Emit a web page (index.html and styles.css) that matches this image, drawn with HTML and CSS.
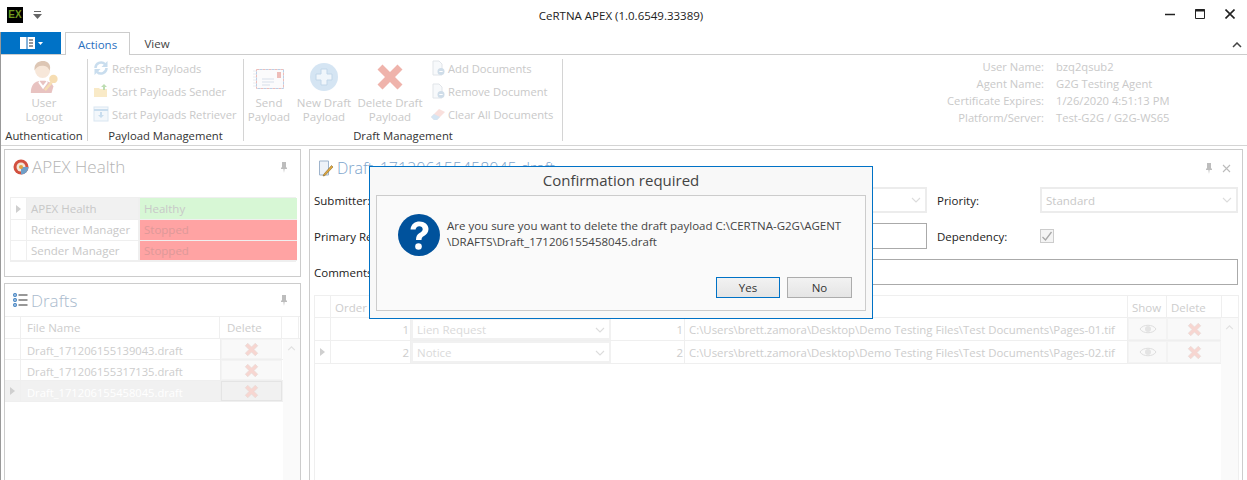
FILE: index.html
```html
<!DOCTYPE html>
<html lang="en">
<head>
<meta charset="utf-8">
<title>CeRTNA APEX</title>
<link rel="stylesheet" href="styles.css">
</head>
<body>
<svg class="defs" width="0" height="0" aria-hidden="true">
  <defs>
    <symbol id="x" viewBox="0 0 24 24"><path d="M2 6 6 2l6 6 6-6 4 4-6 6 6 6-4 4-6-6-6 6-4-4 6-6z" fill="#f7d6d1" stroke="#e6d8d6" stroke-width="1"/></symbol>
    <symbol id="bigx" viewBox="0 0 24 24"><path d="M2 6 6 2l6 6 6-6 4 4-6 6 6 6-4 4-6-6-6 6-4-4 6-6z" fill="#efb3ab"/></symbol>
    <symbol id="pin" viewBox="0 0 10 12"><path d="M3 1h4v5l1 1v1H5.600L5 12 4.400 8H2V7l1-1z" fill="#bdbdbd"/></symbol>
    <symbol id="eye" viewBox="0 0 18 12"><path d="M1 6c3-5 13-5 16 0-3 5-13 5-16 0z" fill="none" stroke="#dedede"/><circle cx="9" cy="6" r="3" fill="#e4e4e4"/></symbol>
    <symbol id="chev" viewBox="0 0 10 6"><path d="M1 1l4 4 4-4" fill="none" stroke="#dcdcdc" stroke-width="1.100"/></symbol>
    <symbol id="chevup" viewBox="0 0 10 6"><path d="M1 5l4-4 4 4" fill="none" stroke="#e0e0e0" stroke-width="1.300"/></symbol>
    <symbol id="doc" viewBox="0 0 16 16"><path d="M3 1h6l3 3v11H3z" fill="#eef2f6" stroke="#b8c2cc"/><circle cx="11" cy="11.500" r="3.500" fill="#8fb0cc"/><path d="M9.300 11.500h3.400" stroke="#fff"/></symbol>
  </defs>
</svg>

<header class="titlebar">
  <div class="tleft">
    <div class="logo">EX</div>
    <svg class="qat" width="9" height="8" viewBox="0 0 9 8"><path d="M1 .5h7" stroke="#666"/><path d="M0 3h9L4.500 8z" fill="#666"/></svg>
  </div>
  <div class="title">CeRTNA APEX (1.0.6549.33389)</div>
  <div class="winctl">
    <svg width="10" height="10" viewBox="0 0 10 10"><path d="M0 5.500h10" stroke="#222" stroke-width="1.500"/></svg>
    <svg width="10" height="10" viewBox="0 0 10 10"><path d="M.5.500h9v9h-9z" fill="none" stroke="#222"/><path d="M0 1.500h10" stroke="#222" stroke-width="2"/></svg>
    <svg width="10" height="10" viewBox="0 0 10 10"><path d="M.5.500l9 9M9.500.500l-9 9" stroke="#222" stroke-width="1.600"/></svg>
  </div>
</header>

<div class="window">
  <nav class="tabs">
    <div class="appbtn">
      <svg width="15" height="12" viewBox="0 0 15 12"><rect width="15" height="12" fill="#fff"/><path d="M7 0v12" stroke="#0a67b5"/><path d="M9 3h4M9 6h4M9 9h4" stroke="#333"/></svg>
      <svg width="5" height="3" viewBox="0 0 5 3"><path d="M0 0h5L2.500 3z" fill="#fff"/></svg>
    </div>
    <div class="tab active">Actions</div>
    <div class="tab">View</div>
    <svg class="collapse" width="10" height="6" viewBox="0 0 10 6"><path d="M1 5l4-4 4 4" fill="none" stroke="#444" stroke-width="1.500"/></svg>
  </nav>

  <section class="ribbon">
    <div class="group g-auth">
      <div class="group-body center">
        <div class="bigbtn b-user">
          <svg width="32" height="36" viewBox="0 0 34 36" class="faded">
            <path d="M3 35c0-9 4-12 10-13h5c5 1 8 3 9 6l-2 7z" fill="#c9716e"/>
            <path d="M12 22l4 5 4-5 1 2-5 7-5-7z" fill="#fff"/>
            <circle cx="15.500" cy="11" r="8" fill="#eec7a6"/>
            <path d="M7 11c-1-7 4-10 9-10s9 4 7 10c-2-4-4-5-8-5s-6 2-8 5z" fill="#b07a4e"/>
            <circle cx="27" cy="20" r="4.500" fill="#eab04a"/>
            <path d="M24 23l-7 8 2 2 7-8z" fill="#eab04a"/>
          </svg>
          <span>User<br>Logout</span>
        </div>
      </div>
      <div class="group-label">Authentication</div>
    </div>

    <div class="group g-payload">
      <div class="group-body list">
        <div class="smallbtn">
          <svg width="16" height="16" viewBox="0 0 16 16" class="faded"><path d="M2.500 8a5.500 5.500 0 0 1 9.500-3.800" fill="none" stroke="#7fb0d8" stroke-width="2.500"/><path d="M13.500 8a5.500 5.500 0 0 1-9.500 3.800" fill="none" stroke="#7fb0d8" stroke-width="2.500"/><path d="M14.500 1v6h-6zM1.500 15V9h6z" fill="#7fb0d8"/></svg>
          <span>Refresh Payloads</span>
        </div>
        <div class="smallbtn">
          <svg width="16" height="16" viewBox="0 0 16 16" class="faded"><path d="M1 5h5l1 1h7v8H1z" fill="#f1cf7c"/><path d="M11 1l3 3h-2v3h-2V4H8z" fill="#63b04a"/></svg>
          <span>Start Payloads Sender</span>
        </div>
        <div class="smallbtn">
          <svg width="16" height="16" viewBox="0 0 16 16" class="faded"><rect x="1" y="1" width="14" height="14" fill="#e4eef7" stroke="#a9c6df"/><path d="M1 4h14" stroke="#7fb0d8" stroke-width="2"/><path d="M7 6h2v3h2l-3 3-3-3h2z" fill="#7fb0d8"/></svg>
          <span>Start Payloads Retriever</span>
        </div>
      </div>
      <div class="group-label">Payload Management</div>
    </div>

    <div class="group g-draft">
      <div class="group-body row">
        <div class="bigbtn b-send">
          <svg width="32" height="30" viewBox="0 0 32 30" class="faded">
            <rect x="3" y="5" width="28" height="20" fill="#f7f7fa"/>
            <rect x="3.500" y="5.500" width="27" height="19" fill="none" stroke="#d9635a" stroke-dasharray="3 3"/>
            <rect x="3.500" y="5.500" width="27" height="19" fill="none" stroke="#5f8fc4" stroke-dasharray="3 3" stroke-dashoffset="3"/>
            <rect x="24" y="8" width="4" height="6" fill="#d9635a"/>
            <path d="M9 15h12M9 18h12M9 21h8" stroke="#9fb4cc"/>
            <path d="M0 7h3M0 10h3M0 13h3M0 16h3M0 19h3M0 22h3" stroke="#cbd3dc"/>
          </svg>
          <span>Send<br>Payload</span>
        </div>
        <div class="bigbtn b-new">
          <svg width="30" height="30" viewBox="0 0 30 30" class="faded">
            <circle cx="15" cy="15" r="14" fill="#9cc2e4"/>
            <path d="M12 7h6v5h5v6h-5v5h-6v-5H7v-6h5z" fill="#dceaf6" stroke="#6fa0cc"/>
          </svg>
          <span>New Draft<br>Payload</span>
        </div>
        <div class="bigbtn b-del">
          <svg width="30" height="30"><use href="#bigx"/></svg>
          <span>Delete Draft<br>Payload</span>
        </div>
        <div class="list docs">
          <div class="smallbtn"><svg width="16" height="16" class="faded"><use href="#doc"/></svg><span>Add Documents</span></div>
          <div class="smallbtn"><svg width="16" height="16" class="faded"><use href="#doc"/></svg><span>Remove Document</span></div>
          <div class="smallbtn">
            <svg width="16" height="16" viewBox="0 0 16 16" class="faded"><path d="M1 11l8-8 6 3-8 8H4z" fill="#f2b6b0"/><path d="M1 11l3-3 6 3-3 3H4z" fill="#9cc2e4"/></svg>
            <span>Clear All Documents</span>
          </div>
        </div>
      </div>
      <div class="group-label">Draft Management</div>
    </div>

    <dl class="info">
      <dt>User Name:</dt><dd>bzq2qsub2</dd>
      <dt>Agent Name:</dt><dd>G2G Testing Agent</dd>
      <dt>Certificate Expires:</dt><dd>1/26/2020 4:51:13 PM</dd>
      <dt>Platform/Server:</dt><dd>Test-G2G / G2G-WS65</dd>
    </dl>
  </section>

  <main class="main">
    <div class="leftcol">
      <section class="panel health">
        <div class="ptitle ptitle-health">
          <svg width="16" height="16" viewBox="0 0 16 16"><circle cx="8" cy="8" r="7.500" fill="#d2503f"/><circle cx="8" cy="8" r="4.500" fill="#f3e7d8"/><path d="M8 8h7.500A7.500 7.500 0 0 1 8 15.500z" fill="#6f9fc8"/><circle cx="8" cy="8" r="2" fill="#e2a13e"/></svg>
          <span>APEX Health</span>
          <svg class="pin" width="10" height="12"><use href="#pin"/></svg>
        </div>
        <div class="hgrid">
          <div class="rowhead"><i class="tri"></i></div><div class="hname sel">APEX Health</div><div class="hval ok">Healthy</div>
          <div class="rowhead"></div><div class="hname">Retriever Manager</div><div class="hval bad">Stopped</div>
          <div class="rowhead"></div><div class="hname">Sender Manager</div><div class="hval bad">Stopped</div>
        </div>
      </section>

      <section class="panel drafts">
        <div class="ptitle ptitle-drafts">
          <svg width="15" height="14" viewBox="0 0 15 14"><g fill="none" stroke="#3d7fc0" stroke-width="1.200"><circle cx="2" cy="2" r="1.400"/><circle cx="2" cy="7" r="1.400"/><circle cx="2" cy="12" r="1.400"/></g><path d="M5.500 2h9M5.500 7h9M5.500 12h9" stroke="#333" stroke-width="1.100"/></svg>
          <span>Drafts</span>
          <svg class="pin" width="10" height="12"><use href="#pin"/></svg>
        </div>
        <div class="dgrid">
          <div class="dhead">
            <div class="c"></div><div class="c">File Name</div><div class="c">Delete</div><div class="c"></div>
          </div>
          <div class="dbody">
            <div class="drows">
              <div class="drow"><div class="c"></div><div class="c">Draft_171206155139043.draft</div><div class="xbtn"><svg width="15" height="15"><use href="#x"/></svg></div></div>
              <div class="drow"><div class="c"></div><div class="c">Draft_171206155317135.draft</div><div class="xbtn"><svg width="15" height="15"><use href="#x"/></svg></div></div>
              <div class="drow current"><div class="c"><i class="tri"></i></div><div class="c">Draft_171206155458045.draft</div><div class="xbtn"><svg width="15" height="15"><use href="#x"/></svg></div></div>
            </div>
            <div class="vscroll"><svg width="9" height="5"><use href="#chevup"/></svg></div>
          </div>
        </div>
      </section>
    </div>

    <section class="panel editor">
      <div class="ptitle ptitle-editor">
        <svg width="16" height="18" viewBox="0 0 16 18"><path d="M1.500 2h9v14h-9z" fill="#eef2f8" stroke="#9fb4cc"/><path d="M6 15l-1 2 2-.5L15 8l-1.500-1.500z" fill="#e0a83e" stroke="#8a6a2a" stroke-width=".6"/></svg>
        <span>Draft_171206155458045.draft</span>
        <svg class="pin" width="10" height="12"><use href="#pin"/></svg>
        <svg class="pclose" width="9" height="9" viewBox="0 0 9 9"><path d="M1 1l7 7M8 1L1 8" stroke="#bbb" stroke-width="1.100"/></svg>
      </div>
      <div class="form">
        <label class="flabel">Submitter:</label>
        <div class="field select"><svg width="10" height="6"><use href="#chev"/></svg></div>
        <span></span>
        <label class="flabel">Priority:</label>
        <div class="field select"><span>Standard</span><svg width="10" height="6"><use href="#chev"/></svg></div>

        <label class="flabel">Primary Recipient:</label>
        <div class="field input"></div>
        <span></span>
        <label class="flabel">Dependency:</label>
        <div class="checkcell"><div class="check"><svg width="12" height="11" viewBox="0 0 12 11"><path d="M1.500 6l3 3 6-8" fill="none" stroke="#a8a8a8" stroke-width="1.300"/></svg></div></div>

        <label class="flabel">Comments:</label>
        <div class="field input wide"></div>
      </div>

      <div class="docgrid">
        <div class="ghead">
          <div class="c"></div><div class="c">Order</div><div class="c"></div><div class="c"></div><div class="c"></div><div class="c">Show</div><div class="c">Delete</div><div class="c"></div>
        </div>
        <div class="gbody">
          <div class="grows">
            <div class="grow">
              <div class="c"></div><div class="c num">1</div>
              <div class="combo"><span>Lien Request</span><svg width="10" height="6"><use href="#chev"/></svg></div>
              <div class="c num">1</div>
              <div class="c path">C:\Users\brett.zamora\Desktop\Demo Testing Files\Test Documents\Pages-01.tif</div>
              <div class="xbtn"><svg width="18" height="12"><use href="#eye"/></svg></div>
              <div class="xbtn"><svg width="15" height="15"><use href="#x"/></svg></div>
            </div>
            <div class="grow">
              <div class="c"><i class="tri"></i></div><div class="c num">2</div>
              <div class="combo"><span>Notice</span><svg width="10" height="6"><use href="#chev"/></svg></div>
              <div class="c num">2</div>
              <div class="c path">C:\Users\brett.zamora\Desktop\Demo Testing Files\Test Documents\Pages-02.tif</div>
              <div class="xbtn"><svg width="18" height="12"><use href="#eye"/></svg></div>
              <div class="xbtn"><svg width="15" height="15"><use href="#x"/></svg></div>
            </div>
          </div>
          <div class="vscroll"><svg width="9" height="5"><use href="#chevup"/></svg></div>
        </div>
      </div>
    </section>
  </main>
</div>

<div class="dialog">
  <div class="dtitle">Confirmation required</div>
  <div class="dbox">
    <div class="dmsg">
      <svg width="42" height="42" viewBox="0 0 42 42"><circle cx="21" cy="21" r="21" fill="#00529c"/><path d="M12.500 15.500C13 10 17 7.500 21.500 7.500c5 0 9 3 9 7.500 0 3.500-2 5.500-4.500 7-2 1.200-2.500 2-2.500 4h-5.500c0-3.500 1-5.500 3.500-7 2-1.200 3.200-2.200 3.200-3.800 0-1.700-1.400-2.900-3.400-2.900-2.200 0-3.400 1.300-3.700 3.200z" fill="#fff"/><circle cx="20.500" cy="32.500" r="3.300" fill="#fff"/></svg>
      <p>Are you sure you want to delete the draft payload C:\CERTNA-G2G\AGENT<br>\DRAFTS\Draft_171206155458045.draft</p>
    </div>
    <div class="dbtns">
      <button class="btn primary" type="button">Yes</button>
      <button class="btn" type="button">No</button>
    </div>
  </div>
</div>
</body>
</html>
```

FILE: styles.css
```css
* { box-sizing: border-box; }
html, body { margin: 0; height: 100%; }
body {
  position: relative;
  width: 1247px;
  height: 480px;
  overflow: hidden;
  background: #fff;
  font-family: "Open Sans", "Noto Sans", sans-serif;
  font-size: 11.5px;
  color: #333;
  display: flex;
  flex-direction: column;
}
.defs { position: absolute; }
svg { display: block; flex: none; }
.faded { opacity: .42; }

/* title bar */
.titlebar { height: 32px; flex: none; display: grid; grid-template-columns: 1fr auto 1fr; align-items: center; padding: 0 12px 2px 7px; }
.tleft { display: flex; align-items: center; }
.logo {
  width: 16px; height: 16px; background: #000; color: #6f9a1e;
  font: bold 10px/16px "Liberation Sans", sans-serif; text-align: center;
}
.qat { margin-left: 10px; }
.title { font-size: 11.5px; color: #222; }
.winctl { display: flex; gap: 20px; justify-content: flex-end; margin-top: -3px; }

/* window body */
.window { flex: 1; min-height: 0; border-left: 1px solid #999; display: flex; flex-direction: column; }
.tabs { height: 23px; flex: none; display: flex; align-items: stretch; border-bottom: 1px solid #ccc; position: relative; }
.appbtn { width: 60px; height: 22px; background: #0072c6; display: flex; align-items: center; justify-content: center; gap: 3px; }
.tab { padding: 4px 0 0; text-align: center; color: #444; }
.tab:nth-child(2) { width: 65px; margin-left: 4px; }
.tab:nth-child(3) { width: 54px; }
.tab.active { color: #2a6fc0; background: #fff; border: 1px solid #ccc; border-bottom: 0; height: 23px; }
.collapse { position: absolute; right: 5px; top: 10px; }

/* ribbon */
.ribbon { height: 91px; flex: none; display: flex; border-bottom: 1px solid #d4d4d4; padding-top: 4px; color: #c9c9c9; }
.group { display: flex; flex-direction: column; border-right: 1px solid #d4d4d4; height: 82px; }
.group-body { flex: 1; min-height: 0; }
.group-label { height: 16px; margin-bottom: -3px; line-height: 16px; text-align: center; color: #333; white-space: nowrap; font-size: 11.3px; }
.g-auth { width: 87px; }
.g-payload { width: 156px; }
.g-draft { width: 319px; }
.center { display: flex; justify-content: center; }
.row { display: flex; }
.list { display: flex; flex-direction: column; gap: 7px; padding: 1px 0 0 5px; }
.smallbtn { display: flex; align-items: center; gap: 3px; height: 16px; white-space: nowrap; font-size: 11.2px; }
.bigbtn { display: flex; flex-direction: column; align-items: center; text-align: center; line-height: 14px; white-space: nowrap; }
.bigbtn span { display: block; }
.b-user svg { margin-bottom: 1px; }
.b-send { width: 50px; padding-top: 5px; }
.b-send span { margin-top: 2px; }
.b-new { width: 60px; padding-top: 3px; }
.b-new span { margin-top: 4px; }
.b-del { width: 72px; padding-top: 3px; }
.b-del span { margin-top: 4px; }
.docs { padding-left: 4px; }
.docs .smallbtn { gap: 2px; }
.info { margin: -1px 0 0; padding: 0; display: grid; grid-template-columns: 481px 1fr; column-gap: 12px; grid-auto-rows: 17px; flex: 1; align-content: start; line-height: 17px; font-size: 11.2px; }
.info dt { text-align: right; }
.info dd { margin: 0; }

/* main */
.main { flex: 1; min-height: 0; display: grid; grid-template-columns: 297px 934px; column-gap: 8px; padding: 3px 0 0 3px; overflow: hidden; }
.leftcol { display: flex; flex-direction: column; gap: 6px; min-height: 0; }
.panel { border: 1px solid #ccc; background: #fff; position: relative; }
.health { height: 128px; flex: none; }
.drafts { flex: 1; min-height: 0; border-bottom: 0; }
.editor { border-bottom: 0; padding: 0 5px 0 4px; }
.ptitle { display: flex; align-items: center; color: #b4b4b4; font-size: 17px; font-weight: 300; white-space: nowrap; }
.pin { margin-left: auto; }
.ptitle-health { height: 47px; padding: 0 11px 14px 8px; gap: 3px; }
.ptitle-drafts { height: 32px; padding: 0 11px 0 8px; gap: 3px; color: #a9bacd; }
.ptitle-editor { height: 37px; padding: 0 6px 1px 4px; gap: 3px; color: #7da4cc; font-size: 16px; overflow: hidden; }
.pclose { margin-left: 5px; }

/* health table */
.hgrid { margin-left: 5px; width: 286px; display: grid; grid-template-columns: 16px 113px 157px; grid-template-rows: 22px 21px 20px; border: 1px solid #efefef; color: #c8c8c8; }
.rowhead { border-right: 1px solid #efefef; border-bottom: 1px solid #efefef; display: flex; align-items: center; justify-content: center; }
.hname { padding: 0 4px; border-right: 2px solid #efefef; border-bottom: 1px solid #efefef; line-height: 20px; white-space: nowrap; }
.hname.sel { background: #f1f1f1; line-height: 21px; }
.hval { padding: 0 4px; line-height: 20px; border-bottom: 1px solid #efefef; }
.hval.ok { background: #d7f7d5; line-height: 21px; }
.hval.bad { background: #ffa3a3; color: #d99; }
.tri { display: block; width: 0; height: 0; border-left: 5px solid #cfcfcf; border-top: 4px solid transparent; border-bottom: 4px solid transparent; }

/* drafts grid */
.dgrid { color: #cdcdcd; }
.dhead { display: grid; grid-template-columns: 16px 199px 62px 17px; height: 23px; border-top: 1px solid #efefef; border-bottom: 1px solid #efefef; }
.dhead .c, .ghead .c { border-right: 1px solid #efefef; padding: 0 6px; line-height: 22px; white-space: nowrap; overflow: hidden; }
.dhead .c:nth-child(3) { padding-left: 7px; }
.dbody, .gbody { display: flex; height: 200px; }
.drows { width: 278px; flex: none; }
.drow { display: grid; grid-template-columns: 16px 200px 61px; height: 21px; border-bottom: 1px solid #efefef; font-size: 11.2px; }
.drow .c { padding: 1px 6px 0; line-height: 22px; white-space: nowrap; overflow: hidden; border-right: 1px solid #efefef; }
.drow .c:first-child { padding: 0; display: flex; align-items: center; justify-content: center; }
.drow.current { background: #f1f1f1; color: #fff; }
.xbtn { display: flex; align-items: center; justify-content: center; background: #f9f9f9; border: 1px solid #f3f3f3; }
.drow.current .xbtn { border-color: #e4e4e4; background: #f1f1f1; }
.vscroll { width: 17px; flex: none; background: #fafafa; padding: 7px 0 0 4px; }

/* editor form */
.form { display: grid; grid-template-columns: 116px 497px 10px 103px 198px; grid-template-rows: repeat(3, 26px); row-gap: 10px; }
.flabel { line-height: 28px; color: #222; white-space: nowrap; overflow: hidden; }
.field { border: 1px solid #aaa; background: #fff; }
.select { border: 2px solid #ececec; display: flex; align-items: center; justify-content: space-between; padding: 0 4px; color: #c8c8c8; }
.select svg { margin-left: auto; }
.wide { grid-column: 2 / 6; }
.checkcell { display: flex; align-items: center; }
.check { width: 14px; height: 14px; border: 1px solid #ccc; background: #f4f4f4; display: flex; align-items: center; justify-content: center; }

/* document grid */
.docgrid { margin-top: 10px; border-left: 1px solid #efefef; border-right: 1px solid #efefef; color: #cdcdcd; width: 925px; }
.ghead { display: grid; grid-template-columns: 16px 80px 200px 74px 443px 39px 55px 17px; height: 23px; border-top: 1px solid #efefef; border-bottom: 1px solid #efefef; }
.ghead .c { padding: 0 4px; line-height: 23px; }
.grows { width: 906px; flex: none; }
.grow { display: grid; grid-template-columns: 16px 80px 200px 74px 443px 39px 54px; height: 23px; border-bottom: 1px solid #efefef; }
.grow .c { padding: 0 5px; line-height: 23px; white-space: nowrap; overflow: hidden; border-right: 1px solid #efefef; }
.grow .c:first-child { padding: 0; display: flex; align-items: center; justify-content: center; }
.grow .num { text-align: right; padding-right: 1px; }
.grow .path { padding-left: 4px; font-size: 11.4px; }
.combo { border: 2px solid #f1f1f1; display: flex; align-items: center; justify-content: space-between; padding: 1px 4px 0; color: #dadada; }

/* dialog */
.dialog {
  position: absolute; left: 369px; top: 166px; width: 504px; height: 153px;
  background: #f8f8f8; border: 1px solid #0072c6;
  padding: 0 6px 7px;
  display: flex; flex-direction: column;
}
.dtitle { height: 28px; line-height: 27px; text-align: center; font-size: 15px; color: #444; flex: none; }
.dbox { flex: 1; border: 1px solid #ccc; background: #fafafa; display: flex; flex-direction: column; justify-content: space-between; padding: 18px 13px 12px 21px; }
.dmsg { display: flex; gap: 7px; }
.dmsg p { margin: 4px 0 0; line-height: 16px; color: #444; font-size: 11.5px; white-space: nowrap; }
.dbtns { display: flex; justify-content: flex-end; gap: 7px; }
.btn { width: 65px; height: 21px; padding: 0; font: inherit; color: #333; background: linear-gradient(#f2f2f2, #e5e5e5); border: 1px solid #acacac; }
.btn.primary { width: 64px; border: 1px solid #0072c6; }
```
